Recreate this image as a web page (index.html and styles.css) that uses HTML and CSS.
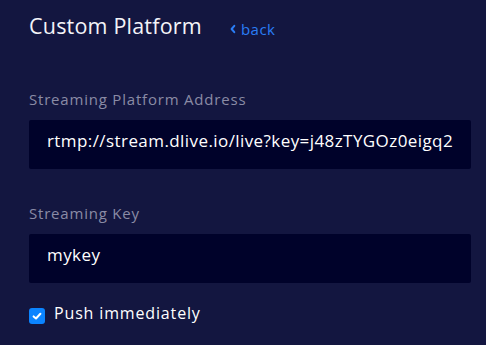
FILE: index.html
```html
<!DOCTYPE html>
<html>
<head>
<meta charset="utf-8">
<link rel="stylesheet" href="styles.css">
</head>
<body>
<div class="page">
  <div class="header">
    <h1 class="title">Custom Platform</h1>
    <a class="back" href="#"><svg class="chev" viewBox="0 0 6 10" width="6" height="10"><path d="M4.3 1.8 L1.6 5 L4.3 8.2" fill="none" stroke="currentColor" stroke-width="2" stroke-linecap="round" stroke-linejoin="round"/></svg>back</a>
  </div>
  <div class="field">
    <div class="label">Streaming Platform Address</div>
    <div class="input"><span class="input-text">rtmp://stream.dlive.io/live?key=j48zTYGOz0eigq2Bc91</span></div>
  </div>
  <div class="field">
    <div class="label">Streaming Key</div>
    <div class="input"><span class="input-text">mykey</span></div>
  </div>
  <label class="check">
    <span class="box"><svg viewBox="0 0 16 16" width="16" height="16"><path d="M4.6 8.4 L7 10.5 L11.4 5.8" fill="none" stroke="#fff" stroke-width="2" stroke-linecap="round" stroke-linejoin="round"/></svg></span>
    <span class="check-text">Push immediately</span>
  </label>
</div>
</body>
</html>
```

FILE: styles.css
```css
html, body {
  margin: 0;
  padding: 0;
  background: #131640;
  height: 100%;
}
body {
  font-family: "Open Sans", "Noto Sans", sans-serif;
  color: #ffffff;
}
.page {
  padding: 11px 15px 0 29px;
}
.header {
  display: flex;
  align-items: baseline;
  gap: 28px;
  height: 78px;
}
.title {
  margin: 0;
  font-size: 21.5px;
  font-weight: 400;
  line-height: 30px;
  letter-spacing: 0.2px;
  color: #f4f4f8;
}
.back {
  color: #2a7df6;
  text-decoration: none;
  font-size: 15px;
  letter-spacing: 0.5px;
  display: flex;
  align-items: center;
  gap: 5px;
}
.chev {
  display: block;
}
.field {
  display: flex;
  flex-direction: column;
}
.label {
  color: #8a8ba5;
  font-size: 15px;
  line-height: 20px;
  letter-spacing: 0.8px;
  margin-bottom: 11px;
}
.input {
  height: 49px;
  box-sizing: border-box;
  background: #00022a;
  border-radius: 2px;
  padding: 0 18px;
  margin-bottom: 34px;
}
.input-text {
  display: block;
  line-height: 41px;
  font-size: 17px;
  letter-spacing: 0.42px;
  color: #ffffff;
  white-space: nowrap;
  overflow: hidden;
}
.field + .field .input {
  margin-bottom: 22px;
}
.check {
  display: flex;
  align-items: center;
  gap: 9px;
  height: 22px;
}
.box {
  width: 16px;
  height: 16px;
  background: #0b84ff;
  border-radius: 3px;
  display: block;
}
.box svg {
  display: block;
}
.check-text {
  font-size: 16px;
  line-height: 22px;
  letter-spacing: 0.85px;
  margin-bottom: 6px;
  color: #ffffff;
}
```
